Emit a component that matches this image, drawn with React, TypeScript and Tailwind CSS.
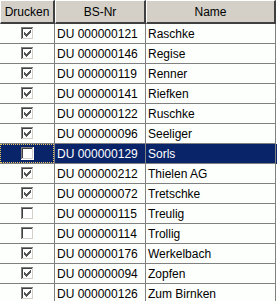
import React from "react";

type Row = { print: boolean; nr: string; name: string };

const rows: Row[] = [
  { print: true, nr: "DU 000000121", name: "Raschke" },
  { print: true, nr: "DU 000000146", name: "Regise" },
  { print: true, nr: "DU 000000119", name: "Renner" },
  { print: true, nr: "DU 000000141", name: "Riefken" },
  { print: true, nr: "DU 000000122", name: "Ruschke" },
  { print: true, nr: "DU 000000096", name: "Seeliger" },
  { print: false, nr: "DU 000000129", name: "Sorls" },
  { print: true, nr: "DU 000000212", name: "Thielen AG" },
  { print: true, nr: "DU 000000072", name: "Tretschke" },
  { print: false, nr: "DU 000000115", name: "Treulig" },
  { print: false, nr: "DU 000000114", name: "Trollig" },
  { print: true, nr: "DU 000000176", name: "Werkelbach" },
  { print: true, nr: "DU 000000094", name: "Zopfen" },
  { print: true, nr: "DU 000000126", name: "Zum Birnken" },
];

const SELECTED = 6;

// classic 13x13 sunken checkbox
function CheckBox({ checked }: { checked: boolean }) {
  const tick = [
    [6, 0], [5, 1], [6, 1], [0, 2], [4, 2], [5, 2], [6, 2],
    [0, 3], [1, 3], [3, 3], [4, 3], [5, 3],
    [0, 4], [1, 4], [2, 4], [3, 4], [4, 4],
    [1, 5], [2, 5], [3, 5], [2, 6],
  ];
  return (
    <svg width="13" height="13" viewBox="0 0 13 13" shapeRendering="crispEdges">
      <rect x="0" y="0" width="13" height="13" fill="#ffffff" />
      <rect x="0" y="0" width="12" height="1" fill="#808080" />
      <rect x="0" y="0" width="1" height="12" fill="#808080" />
      <rect x="1" y="1" width="10" height="1" fill="#404040" />
      <rect x="1" y="1" width="1" height="10" fill="#404040" />
      <rect x="1" y="11" width="11" height="1" fill="#d4d0c8" />
      <rect x="11" y="1" width="1" height="11" fill="#d4d0c8" />
      {checked &&
        tick.map(([x, y]) => (
          <rect key={`${x}-${y}`} x={x + 3} y={y + 3} width="1" height="1" fill="#555555" />
        ))}
    </svg>
  );
}

function HeaderCell({ children, w }: { children: React.ReactNode; w: string }) {
  return (
    <div
      className={`${w} h-[24px] flex items-center justify-center bg-[#d4d0c8] border-t border-l border-t-white border-l-white border-b-2 border-r-2 border-b-[#404040] border-r-[#404040] text-black`}
    >
      {children}
    </div>
  );
}

export default function App() {
  return (
    <div
      className="w-[277px] h-[301px] overflow-hidden bg-white text-[12px] leading-none"
      style={{ fontFamily: '"Liberation Sans", Arial, sans-serif' }}
    >
      <div className="flex">
        <HeaderCell w="w-[55px]">Drucken</HeaderCell>
        <HeaderCell w="w-[91px]">BS-Nr</HeaderCell>
        <HeaderCell w="w-[130px]">Name</HeaderCell>
      </div>

      {rows.map((r, i) => {
        const sel = i === SELECTED;
        return (
          <div key={r.nr} className={`flex h-[20px] ${sel ? "bg-[#0a246a] text-white" : "bg-[#fcfffc] text-black"}`}>
            <div className="w-[55px] border-r border-b border-[#808080] flex">
              <div
                className={`flex-1 flex items-center justify-center ${sel ? "border border-dotted border-[#e8c860]" : ""}`}
              >
                <CheckBox checked={r.print} />
              </div>
            </div>
            <div className="w-[91px] border-r border-b border-[#808080] flex items-center pl-[2px] whitespace-nowrap">
              {r.nr}
            </div>
            <div className="w-[130px] border-r border-b border-[#808080] flex items-center pl-[2px] whitespace-nowrap">
              {r.name}
            </div>
          </div>
        );
      })}
    </div>
  );
}
